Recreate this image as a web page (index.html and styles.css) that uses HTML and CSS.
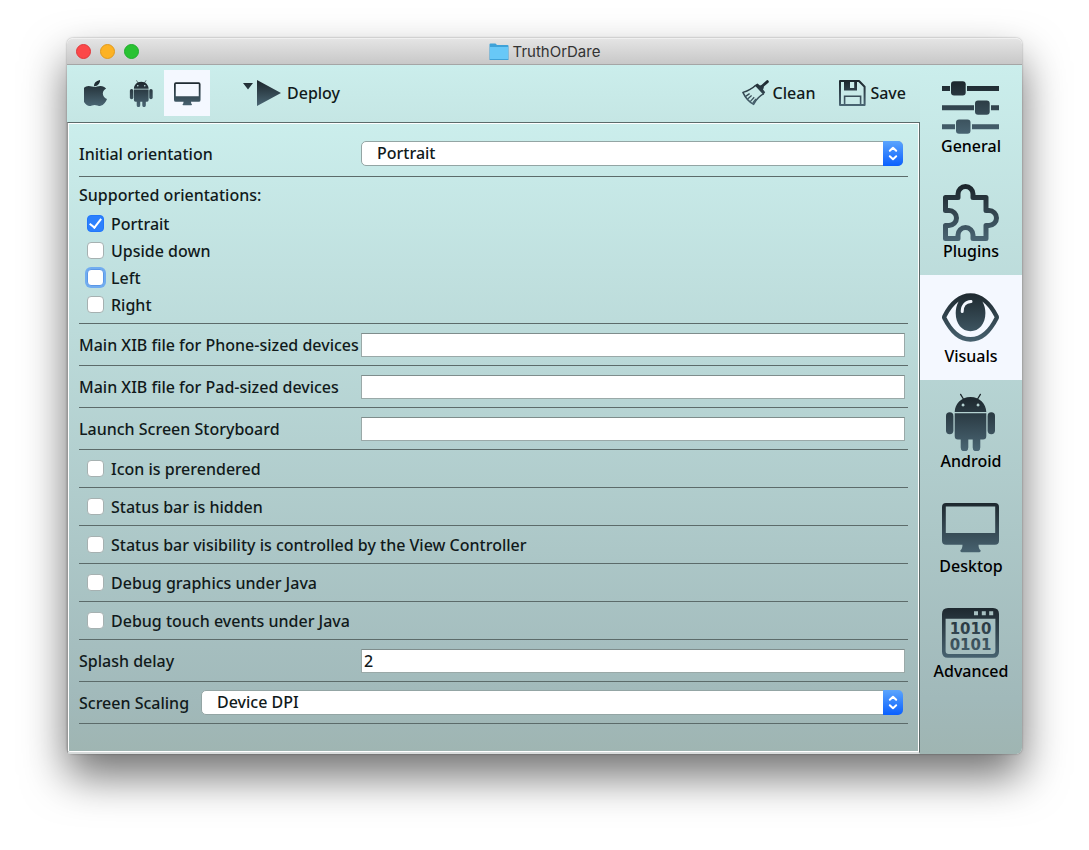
FILE: index.html
```html
<!DOCTYPE html>
<html lang="en">
<head>
  <meta charset="UTF-8" />
  <title>TruthOrDare</title>
  <meta name="viewport" content="width=device-width, initial-scale=1.0" />
  <link rel="stylesheet" href="styles.css">
</head>
<body>

<!-- Icon symbols -->
<svg class="symbols" aria-hidden="true">
  <defs>
    <linearGradient id="ink" gradientUnits="userSpaceOnUse" x1="0" y1="2" x2="0" y2="58">
      <stop offset="0" stop-color="#1b252b" />
      <stop offset="1" stop-color="#4a6674" />
    </linearGradient>
    <linearGradient id="ink-small" gradientUnits="userSpaceOnUse" x1="0" y1="0" x2="0" y2="26">
      <stop offset="0" stop-color="#1b252b" />
      <stop offset="1" stop-color="#4a6674" />
    </linearGradient>
    <linearGradient id="ink-apple" gradientUnits="userSpaceOnUse" x1="0" y1="0" x2="0" y2="1664">
      <stop offset="0" stop-color="#1b252b" />
      <stop offset="1" stop-color="#4a6674" />
    </linearGradient>
  </defs>

  <symbol id="icon-apple" viewBox="147 0 1246 1664" preserveAspectRatio="none">
    <path fill="url(#ink-apple)" d="M1393 1215q-39 125-123 250-129 196-257 196-49 0-140-32-86-32-151-32-61 0-142 33-81 34-132 34-152 0-301-259-147-261-147-503 0-228 113-374 113-144 284-144 72 0 177 30 104 30 138 30 45 0 143-34 102-34 173-34 119 0 213 65 52 36 104 100-79 67-114 118-65 94-65 207 0 124 69 223t158 126zM1017 42q0 61-29 136-30 75-93 138-54 54-108 72-37 11-104 17 3-149 78-257 74-107 250-148 1 3 2.5 11t2.5 11q0 4 .5 10t.5 10z" />
  </symbol>

  <symbol id="icon-android" viewBox="0 0 58 58">
    <g fill="url(#ink)">
      <path fill-rule="evenodd" d="M12.7 19 C13 11 19 4 28.5 4 S44 11 44.3 19Z M21 10.6 a1.5 1.5 0 1 0 .1 0Z M36 10.6 a1.5 1.5 0 1 0 .1 0Z" />
      <path d="M12.7 20.2 H44.3 V43 Q44.3 46.5 41 46.5 H38.3 V54.5 A3.8 3.8 0 0 1 30.7 54.5 V46.5 H26.3 V54.5 A3.8 3.8 0 0 1 18.7 54.5 V46.5 H16 Q12.7 46.5 12.7 43Z" />
      <rect x="4" y="19.2" width="7.4" height="22" rx="3.7" />
      <rect x="45.6" y="19.2" width="7.4" height="22" rx="3.7" />
    </g>
    <path fill="none" stroke="#1d272d" stroke-width="1.3" stroke-linecap="round" d="M18.6 1.4 L21.4 6 M38.4 1.4 L35.6 6" />
  </symbol>

  <symbol id="icon-desktop" viewBox="0 0 58 58">
    <path fill="url(#ink)" fill-rule="evenodd" d="M4 5 H53 Q57 5 57 9 V42.7 Q57 46.7 53 46.7 H36.5 Q36.6 51 38.6 52.3 Q38.8 54.3 37 54.3 H20 Q18.2 54.3 18.4 52.3 Q20.4 51 20.5 46.7 H4 Q0 46.7 0 42.7 V9 Q0 5 4 5Z M3.8 8.5 V35 H53.2 V8.5Z" />
  </symbol>

  <symbol id="icon-general" viewBox="0 0 58 58">
    <path fill="url(#ink)" d="M0 8 H8 V13 H0Z M25 8 H57 V13 H25Z M0 27.2 H32 V32.2 H0Z M49 27.2 H57 V32.2 H49Z M0 46.2 H13 V51.2 H0Z M30 46.2 H57 V51.2 H30Z" />
    <g fill="url(#ink)">
      <rect x="9" y="3.2" width="14.7" height="14.4" rx="3" />
      <rect x="33" y="22.4" width="14.7" height="14.4" rx="3" />
      <rect x="14" y="41.4" width="14.5" height="14.4" rx="3" />
    </g>
  </symbol>

  <symbol id="icon-plugins" viewBox="0 0 58 58">
    <path fill="none" stroke="url(#ink)" stroke-width="5" stroke-linejoin="round" d="M3.5 14.5 H16 V11 A7.5 7.5 0 0 1 31 11 V14.5 H44 V27.5 H47 A7.5 7.5 0 0 1 47 42.5 H44 V55.5 H31 V52 A7.5 7.5 0 0 0 16 52 V55.5 H3.5 V42.5 H7 A7.5 7.5 0 0 0 7 27.5 H3.5Z" />
  </symbol>

  <symbol id="icon-visuals" viewBox="0 0 58 58">
    <path fill="url(#ink)" fill-rule="evenodd" d="M.4 27.4 C8 13 17 5.3 28.5 5.3 S49 13 56.6 27.4 Q57.4 29.2 56.6 31 C49 46 40 53.7 28.5 53.7 S8 46 .4 31 Q-.4 29.2 .4 27.4Z M4.4 29.3 C11 42 18 49 28.5 49 S46 42 52.6 29.3 C49 22.5 45 17 40.4 13.6 C42.4 17 43.4 21 43.4 25 C43.4 36 37 43.2 28.5 43.2 S13.7 36 13.7 25 C13.7 21 14.6 17 16.6 13.6 C12 17 8 22.5 4.4 29.3Z" />
    <path fill="none" stroke="#f4f8ff" stroke-width="3" stroke-linecap="round" d="M29 13.6 C23.5 13.8 20.2 17.5 20.2 23.6" />
  </symbol>

  <symbol id="icon-advanced" viewBox="0 0 58 58">
    <path fill="url(#ink)" fill-rule="evenodd" d="M6 5 H51 Q57 5 57 11 V48.7 Q57 54.7 51 54.7 H6 Q0 54.7 0 48.7 V11 Q0 5 6 5Z M3.6 15.8 V48 Q3.6 51 6.6 51 H50.4 Q53.4 51 53.4 48 V15.8Z M32 8.2 V12.2 H36 V8.2Z M39.8 8.2 V12.2 H43.8 V8.2Z M47.2 8.2 V12.2 H51.2 V8.2Z" />
    <g class="digits" fill="url(#ink)">
      <text x="28.5" y="31" text-anchor="middle">1010</text>
      <text x="28.5" y="47" text-anchor="middle">0101</text>
    </g>
  </symbol>

  <symbol id="icon-deploy" viewBox="0 0 38 26">
    <path fill="url(#ink-small)" d="M0 3 H10 L5 9.4Z M14 0 L38 13 L14 26Z" />
  </symbol>

  <symbol id="icon-clean" viewBox="0 0 27 26">
    <g fill="none" stroke="url(#ink-small)" stroke-linejoin="round">
      <path stroke-width="2.8" stroke-linecap="round" d="M25.4 1.6 L19.5 6.8" />
      <path stroke-width="1.5" d="M13.5 5.5 Q8 10.5 .9 12.4 Q4.6 20.5 11.6 24.4 Q15.5 17 21.8 13.6" />
      <path stroke-width="1.3" d="M3.6 16.4 L7.6 13.6 M5.6 19 L9.6 15.6 M8.2 21.6 L12.2 17.2 M10.8 23 L14 19" />
    </g>
    <path fill="url(#ink-small)" d="M12.6 5.2 L15.4 3.4 L18 5.6 Q20.4 4.6 21.4 6 T21 9.6 L23.2 12.2 L21.4 14.8Z" />
  </symbol>

  <symbol id="icon-save" viewBox="0 0 27 26">
    <path fill="none" stroke="url(#ink-small)" stroke-width="2" stroke-linejoin="round" d="M1 1 H20 L25.6 6.8 V25 H1Z" />
    <path fill="url(#ink-small)" fill-rule="evenodd" d="M5 1 H18 V10.6 H5Z M11 2 V8 H15.2 V2Z" />
    <path fill="none" stroke="url(#ink-small)" stroke-width="1.6" d="M5.6 25 V16.2 H21.6 V25" />
  </symbol>

  <symbol id="icon-arrows" viewBox="0 0 20 24">
    <path fill="none" stroke="#fff" stroke-width="2" stroke-linecap="round" stroke-linejoin="round" d="M6.8 9.2 L10 6.2 L13.2 9.2 M6.8 14.8 L10 17.8 L13.2 14.8" />
  </symbol>

  <symbol id="icon-folder" viewBox="0 0 20 18">
    <path fill="#3fa2d8" d="M.5 1.5 Q.5 .5 1.5 .5 H6.5 L8 2 H18.5 Q19.5 2 19.5 3 V17 H.5Z" />
    <path fill="#68c8f7" d="M1 4 H19 V16 H1Z" />
  </symbol>
</svg>

<div class="window">
  <header class="titlebar">
    <div class="lights">
      <button class="light close" aria-label="Close"></button>
      <button class="light minimize" aria-label="Minimize"></button>
      <button class="light zoom" aria-label="Zoom"></button>
    </div>
    <h1><svg width="20" height="18"><use href="#icon-folder" /></svg>TruthOrDare</h1>
  </header>

  <div class="content">
    <main>
      <div class="toolbar">
        <button class="platform" aria-label="iOS"><svg width="23" height="26"><use href="#icon-apple" /></svg></button>
        <button class="platform" aria-label="Android"><svg width="27" height="27"><use href="#icon-android" /></svg></button>
        <button class="platform selected" aria-label="Desktop"><svg width="27" height="27"><use href="#icon-desktop" /></svg></button>
        <button class="action deploy"><svg width="38" height="26"><use href="#icon-deploy" /></svg>Deploy</button>
        <button class="action clean"><svg width="27" height="26"><use href="#icon-clean" /></svg>Clean</button>
        <button class="action"><svg width="27" height="26"><use href="#icon-save" /></svg>Save</button>
      </div>

      <form class="panel">
        <div class="row">
          <label class="name" for="initial">Initial orientation</label>
          <div class="select">
            <select id="initial">
              <option>Portrait</option>
              <option>Upside down</option>
              <option>Left</option>
              <option>Right</option>
            </select>
            <svg><use href="#icon-arrows" /></svg>
          </div>
        </div>

        <fieldset class="group">
          <legend>Supported orientations:</legend>
          <label class="check"><input type="checkbox" checked />Portrait</label>
          <label class="check"><input type="checkbox" />Upside down</label>
          <label class="check"><input type="checkbox" class="focused" />Left</label>
          <label class="check"><input type="checkbox" />Right</label>
        </fieldset>

        <div class="row">
          <label class="name" for="phone">Main XIB file for Phone-sized devices</label>
          <input type="text" id="phone" />
        </div>
        <div class="row">
          <label class="name" for="pad">Main XIB file for Pad-sized devices</label>
          <input type="text" id="pad" />
        </div>
        <div class="row">
          <label class="name" for="storyboard">Launch Screen Storyboard</label>
          <input type="text" id="storyboard" />
        </div>

        <div class="row short"><label class="check"><input type="checkbox" />Icon is prerendered</label></div>
        <div class="row short"><label class="check"><input type="checkbox" />Status bar is hidden</label></div>
        <div class="row short"><label class="check"><input type="checkbox" />Status bar visibility is controlled by the View Controller</label></div>
        <div class="row short"><label class="check"><input type="checkbox" />Debug graphics under Java</label></div>
        <div class="row short"><label class="check"><input type="checkbox" />Debug touch events under Java</label></div>

        <div class="row">
          <label class="name" for="splash">Splash delay</label>
          <input type="text" id="splash" value="2" />
        </div>
        <div class="row">
          <label class="name narrow" for="scaling">Screen Scaling</label>
          <div class="select">
            <select id="scaling">
              <option>Device DPI</option>
            </select>
            <svg><use href="#icon-arrows" /></svg>
          </div>
        </div>
      </form>
    </main>

    <nav class="sidebar">
      <a href="#general"><svg><use href="#icon-general" /></svg>General</a>
      <a href="#plugins"><svg><use href="#icon-plugins" /></svg>Plugins</a>
      <a href="#visuals" class="selected"><svg><use href="#icon-visuals" /></svg>Visuals</a>
      <a href="#android"><svg><use href="#icon-android" /></svg>Android</a>
      <a href="#desktop"><svg><use href="#icon-desktop" /></svg>Desktop</a>
      <a href="#advanced"><svg><use href="#icon-advanced" /></svg>Advanced</a>
    </nav>
  </div>
</div>

</body>
</html>
```
FILE: styles.css
```css
:root {
  --top: #cbeeec;
  --bottom: #9fb5b2;
  --line: #5c6b6a;
  --selected: #f4f8ff;
  --text: #111a1b;
}

* {
  box-sizing: border-box;
}

body {
  min-height: 100vh;
  margin: 0;
  padding: 38px 67px;
  background: #fff;
  color: var(--text);
  font-family: "Noto Sans", sans-serif;
  font-size: 16px;
  font-weight: 500;
  line-height: 20px;
}

button, input, select {
  font: inherit;
  color: inherit;
}

button {
  border: none;
  padding: 0;
  background: none;
}

svg {
  display: block;
  flex: none;
}

.symbols {
  position: absolute;
  width: 0;
  height: 0;
}

.digits {
  font-family: "DejaVu Sans", sans-serif;
  font-size: 15px;
  font-weight: bold;
}

.window {
  border-radius: 6px;
  box-shadow: 0 0 2px rgba(0, 0, 0, 0.4), 0 22px 44px rgba(0, 0, 0, 0.56);
}

/* Title bar */
.titlebar {
  display: grid;
  grid-template-columns: 1fr auto 1fr;
  align-items: center;
  height: 27px;
  padding: 0 9px;
  border-top: 1px solid #f0f0f0;
  border-bottom: 1px solid #a5a5a5;
  border-radius: 6px 6px 0 0;
  background: linear-gradient(#e4e4e4, #c8c8c8);
}

.lights {
  display: flex;
  gap: 9px;
}

.light {
  width: 15px;
  height: 15px;
  border: 1px solid #e0383b;
  border-radius: 50%;
  background: #fc4849;
}

.minimize {
  border-color: #e19a1d;
  background: #fdb224;
}

.zoom {
  border-color: #1fae2c;
  background: #29c232;
}

.titlebar h1 {
  display: flex;
  align-items: center;
  gap: 4px;
  margin: 0;
  color: #333;
  font-family: Inter, sans-serif;
  font-size: 15px;
  font-weight: normal;
}

.content {
  display: grid;
  grid-template-columns: 1fr 102px;
}

/* Toolbar */
.toolbar {
  display: flex;
  align-items: flex-start;
  height: 57px;
  padding: 5px 14px 0 5px;
  background: linear-gradient(var(--top), #c5e6e4);
}

.platform {
  display: grid;
  place-items: center;
  width: 46px;
  height: 46px;
}

.selected {
  background: var(--selected);
}

.action {
  display: flex;
  align-items: center;
  gap: 4px;
  height: 46px;
}

.deploy {
  gap: 6px;
  margin-left: 33px;
}

.clean {
  margin-left: auto;
  margin-right: 24px;
}

/* Settings panel */
.panel {
  padding: 8px 11px 28px;
  border: 1px solid var(--line);
  border-left-color: #999;
  border-bottom: 2px solid #d8dcdc;
  border-bottom-left-radius: 3px;
  box-shadow: inset 0 0 0 1px #fff;
  background: linear-gradient(var(--top), #a1b9ba 92%, var(--bottom));
}

.row {
  display: flex;
  align-items: center;
  height: 42px;
  padding-right: 3px;
  border-bottom: 1px solid var(--line);
}

.row:first-child {
  height: 46px;
}

.row.short {
  height: 38px;
}

.name {
  flex: none;
  width: 282px;
}

.name.narrow {
  width: 122px;
}

.row input[type="text"] {
  flex: 1;
  min-width: 0;
  height: 24px;
  padding: 0 2px;
  border: 1px solid #9aa9a8;
  border-top-color: #7f8d8c;
  border-radius: 0;
  background: #fff;
}

.select {
  position: relative;
  flex: 1;
  margin-right: 2px;
}

.select select {
  display: block;
  appearance: none;
  width: 100%;
  height: 25px;
  padding: 0 28px 2px 15px;
  border: 1px solid #93a5a4;
  border-radius: 5px;
  background: #fff;
}

.select svg {
  position: absolute;
  top: 0;
  right: 0;
  width: 20px;
  height: 25px;
  border-radius: 0 5px 5px 0;
  background: linear-gradient(#5ba5fd, #0a60fe);
  pointer-events: none;
}

.group {
  margin: 0;
  padding: 5px 0;
  border: none;
  border-bottom: 1px solid var(--line);
}

.group legend {
  float: left;
  width: 100%;
  padding: 0 0 2px;
  line-height: 26px;
}

.check {
  display: flex;
  align-items: center;
  gap: 7px;
  padding-left: 8px;
}

.group .check {
  clear: both;
  height: 27px;
}

.check input {
  display: grid;
  place-items: center;
  appearance: none;
  width: 17px;
  height: 17px;
  margin: 0;
  border: 1px solid #a6b1b1;
  border-radius: 4px;
  background: #fff;
}

.check input:checked {
  border-color: #2277fb;
  background: #2c80fd;
}

.check input:checked::after {
  content: "";
  width: 5px;
  height: 10px;
  margin-bottom: 3px;
  border: solid #fff;
  border-width: 0 2px 2px 0;
  transform: rotate(38deg);
}

.check .focused {
  border-color: #5b97e6;
  box-shadow: 0 0 0 2px #70acf0;
}

/* Sidebar */
.sidebar {
  border-bottom-right-radius: 6px;
  background: linear-gradient(var(--top), #a1b9ba 92%, var(--bottom));
}

.sidebar a {
  display: flex;
  flex-direction: column;
  align-items: center;
  height: 105px;
  padding-top: 13px;
  color: #000;
  text-decoration: none;
}

.sidebar svg {
  width: 58px;
  height: 58px;
}
```
